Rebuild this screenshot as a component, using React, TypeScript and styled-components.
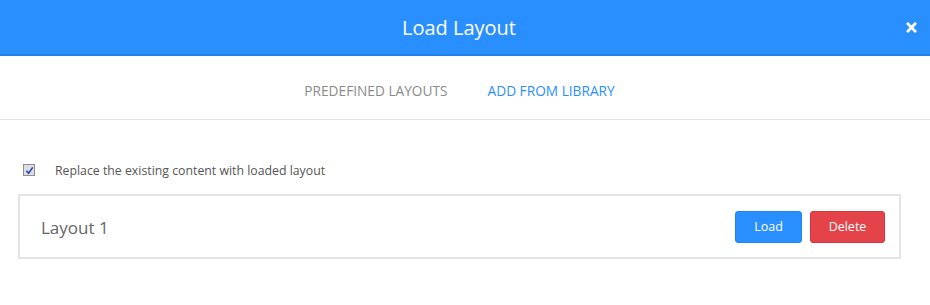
import React, { useState } from "react";
import styled, { createGlobalStyle } from "styled-components";
import { FaTimes } from "react-icons/fa";

const GlobalStyle = createGlobalStyle`
  body {
    margin: 0;
    background: #fff;
    font-family: "Open Sans", "Liberation Sans", sans-serif;
  }
`;

const Modal = styled.div`
  width: 930px;
  height: 305px;
  background: #fff;
`;

const Header = styled.div`
  position: relative;
  height: 54px;
  background: #2a8ffe;
  border-bottom: 2px solid #1d7ff0;
  display: flex;
  align-items: center;
  justify-content: center;
  padding-right: 12px;
`;

const Title = styled.h2`
  margin: 0;
  color: #fff;
  font-size: 20px;
  font-weight: 400;
`;

const Close = styled.button`
  position: absolute;
  right: 11px;
  top: 20px;
  background: none;
  border: none;
  padding: 0;
  color: #fff;
  display: flex;
  cursor: pointer;
`;

const Tabs = styled.div`
  height: 64px;
  border-bottom: 1px solid #e3e3e3;
  display: flex;
  align-items: center;
  justify-content: center;
  padding: 6px 11px 0 0;
  box-sizing: border-box;
`;

const Tab = styled.div<{ $active?: boolean }>`
  padding: 0 20px;
  font-size: 13.7px;
  font-weight: 400;
  text-transform: uppercase;
  color: ${(p) => (p.$active ? "#2a8ffe" : "#8a8a8a")};
  cursor: pointer;
`;

const Body = styled.div`
  padding: 43px 0 0 18px;
`;

const CheckRow = styled.label`
  display: flex;
  align-items: center;
  padding-left: 5px;
  height: 14px;
  font-size: 12.3px;
  color: #555;
  cursor: pointer;
`;

const Box = styled.span`
  width: 10px;
  height: 10px;
  border: 1px solid #8e8e8e;
  background: #dcdce4;
  display: flex;
  align-items: center;
  justify-content: center;
  margin-right: 20px;
`;

const Card = styled.div`
  margin-top: 17px;
  width: 883px;
  height: 65px;
  box-sizing: border-box;
  border: 2px solid #e4e4e4;
  display: flex;
  align-items: center;
  padding: 0 14px 0 21px;
`;

const Name = styled.div`
  flex: 1;
  font-size: 17px;
  color: #666;
  padding-top: 1px;
`;

const Btn = styled.button<{ $danger?: boolean }>`
  height: 32px;
  width: ${(p) => (p.$danger ? "75px" : "67px")};
  margin-left: 8px;
  border: 1px solid ${(p) => (p.$danger ? "#d8363d" : "#1f86f6")};
  border-radius: 3px;
  background: ${(p) => (p.$danger ? "#e5434a" : "#2a8ffe")};
  color: #fff;
  font-family: inherit;
  font-size: 12.5px;
  cursor: pointer;
`;

export default function App() {
  const [tab, setTab] = useState(1);
  const [checked, setChecked] = useState(true);
  return (
    <Modal>
      <GlobalStyle />
      <Header>
        <Title>Load Layout</Title>
        <Close>
          <FaTimes size={15} />
        </Close>
      </Header>
      <Tabs>
        <Tab $active={tab === 0} onClick={() => setTab(0)}>Predefined Layouts</Tab>
        <Tab $active={tab === 1} onClick={() => setTab(1)}>Add from Library</Tab>
      </Tabs>
      <Body>
        <CheckRow onClick={() => setChecked(!checked)}>
          <Box>
            {checked && (
              <svg width="9" height="9" viewBox="0 0 10 10">
                <path d="M1.5 5.2 L4 8 L8.6 1.5" fill="none" stroke="#2b45b3" strokeWidth="1.8" />
              </svg>
            )}
          </Box>
          Replace the existing content with loaded layout
        </CheckRow>
        <Card>
          <Name>Layout 1</Name>
          <Btn>Load</Btn>
          <Btn $danger>Delete</Btn>
        </Card>
      </Body>
    </Modal>
  );
}
